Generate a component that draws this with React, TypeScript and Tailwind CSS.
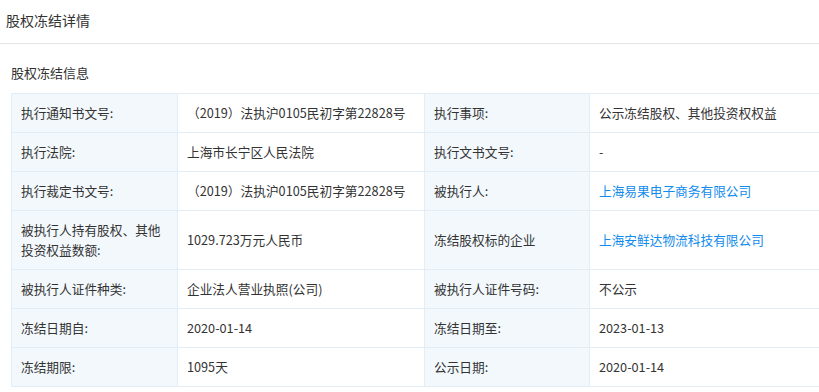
import React from "react";

type Cell = { text: string; link?: boolean };
type Row = [string, Cell, string, Cell];

const rows: Row[] = [
    ["执行通知书文号:", { text: "（2019）法执沪0105民初字第22828号" }, "执行事项:", { text: "公示冻结股权、其他投资权权益" }],
    ["执行法院:", { text: "上海市长宁区人民法院" }, "执行文书文号:", { text: "-" }],
    ["执行裁定书文号:", { text: "（2019）法执沪0105民初字第22828号" }, "被执行人:", { text: "上海易果电子商务有限公司", link: true }],
    ["被执行人持有股权、其他投资权益数额:", { text: "1029.723万元人民币" }, "冻结股权标的企业", { text: "上海安鲜达物流科技有限公司", link: true }],
    ["被执行人证件种类:", { text: "企业法人营业执照(公司)" }, "被执行人证件号码:", { text: "不公示" }],
    ["冻结日期自:", { text: "2020-01-14" }, "冻结日期至:", { text: "2023-01-13" }],
    ["冻结期限:", { text: "1095天" }, "公示日期:", { text: "2020-01-14" }],
];

const labelCls = "border border-[#e3edf6] bg-[#f2f8fc] pl-[9px] pr-[10px] py-[9px] align-middle text-left font-normal";
const valueCls = "border border-[#e3edf6] bg-white pl-[9px] pr-[10px] py-[9px] align-middle text-left";

const Value = ({ cell }: { cell: Cell }) => (
    <td className={valueCls}>
        {cell.link ? <span className="text-[#128bed]">{cell.text}</span> : cell.text}
    </td>
);

export default function App() {
    return (
        <div
            className="w-[819px] h-[392px] overflow-hidden bg-white text-[#333]"
            style={{ fontFamily: '"Noto Sans CJK SC", "Noto Sans", sans-serif' }}
        >
            <div className="h-[44px] border-b border-[#e5e5e5] px-[6px] pt-[10px] text-[14px] leading-[20px]">
                股权冻结详情
            </div>
            <div className="pl-[11px]">
                <div className="pt-[19px] pb-[10px] text-[13px] leading-[20px]">股权冻结信息</div>
                <table className="w-[826px] table-fixed border-collapse text-[12.7px] leading-[20px]">
                    <colgroup>
                        <col className="w-[166px]" />
                        <col className="w-[247px]" />
                        <col className="w-[165px]" />
                        <col className="w-[248px]" />
                    </colgroup>
                    <tbody>
                        {rows.map((r, i) => (
                            <tr key={i}>
                                <th className={labelCls}>{r[0]}</th>
                                <Value cell={r[1]} />
                                <th className={labelCls}>{r[2]}</th>
                                <Value cell={r[3]} />
                            </tr>
                        ))}
                    </tbody>
                </table>
            </div>
        </div>
    );
}
